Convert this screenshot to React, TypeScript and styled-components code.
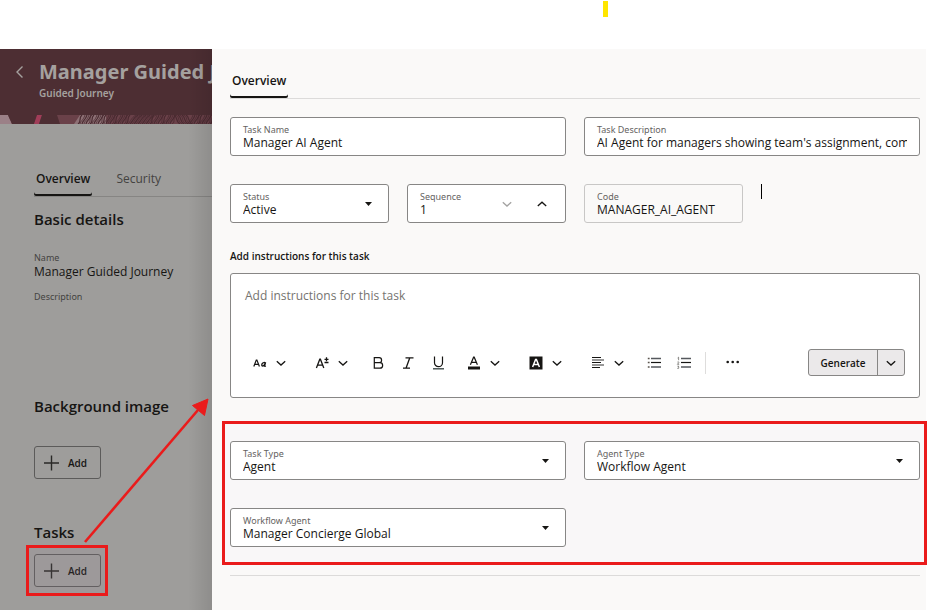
import React, { useState } from "react";
import styled, { createGlobalStyle } from "styled-components";

const GlobalStyle = createGlobalStyle`
  *, *::before, *::after { box-sizing: border-box; }
  body {
    margin: 0;
    background: #fff;
    color: #161513;
    font-family: "Open Sans", "Noto Sans", sans-serif;
    font-size: 12px;
    line-height: 16px;
  }
  button, input, select, textarea { font: inherit; color: inherit; }
  h1, h2, p { margin: 0; }
`;

const Page = styled.div`
  display: flex;
  flex-direction: column;
  min-height: 100vh;
`;

const TopStrip = styled.div`
  height: 49px;
  padding-top: 1px;
`;

const YellowMark = styled.div`
  width: 5px;
  height: 16px;
  margin-left: 65%;
  background: #ffe600;
`;

const Workspace = styled.div`
  display: flex;
  flex: 1;
`;

/* Dimmed page behind the drawer */

const Backdrop = styled.aside`
  position: relative;
  width: 212px;
  flex: none;
  background: #9e9d9b;
  &::after {
    content: "";
    position: absolute;
    inset: 0 0 0 auto;
    width: 24px;
    background: linear-gradient(to right, rgba(0, 0, 0, 0), rgba(0, 0, 0, 0.1));
    pointer-events: none;
  }
`;

const Banner = styled.header`
  display: flex;
  gap: 12px;
  height: 66px;
  padding: 9px 0 0 13px;
  background: #4d2e33;
  color: #a5a19f;
  white-space: nowrap;
`;

const BannerText = styled.div`
  flex: 1;
  min-width: 0;
  font-family: "Noto Sans", "Open Sans", sans-serif;
`;

const BackButton = styled.button`
  display: flex;
  align-items: center;
  width: 14px;
  height: 28px;
  padding: 0;
  border: 0;
  background: none;
`;

const BannerTitle = styled.h1`
  overflow: hidden;
  font-size: 20px;
  line-height: 28px;
  font-weight: 700;
`;

const BannerSubtitle = styled.p`
  font-size: 10px;
  line-height: 14px;
  font-weight: 600;
`;

const BandSvg = styled.svg`
  display: block;
  width: 100%;
  height: 9px;
`;

const TabBar = styled.nav<{ $dim?: boolean }>`
  display: flex;
  gap: 22px;
  border-bottom: 1px solid ${(p) => (p.$dim ? "#868583" : "#dcdbda")};
`;

const Tab = styled.button<{ $active?: boolean }>`
  height: 33px;
  padding: 0 2px 2px;
  border: 0;
  border-radius: 2px;
  background: none;
  font-weight: ${(p) => (p.$active ? 600 : 400)};
  color: ${(p) => (p.$active ? "#161513" : "#444341")};
  box-shadow: ${(p) => (p.$active ? "inset 0 -2px #161513" : "none")};
`;

const BackdropBody = styled.div`
  padding: 39px 0 0 34px;
`;

const Heading = styled.h2`
  font-size: 15px;
  line-height: 20px;
  font-weight: 600;
`;

const DetailsSection = styled.section`
  padding: 12px 0 69px;
`;

const Details = styled.dl`
  margin: 22px 0 0;
`;

const Term = styled.dt`
  font-family: "Noto Sans", "Open Sans", sans-serif;
  font-size: 9px;
  line-height: 14px;
  color: #444341;
`;

const Value = styled.dd`
  min-height: 12px;
  margin: 0 0 11px;
  line-height: 14px;
`;

const Section = styled.section`
  position: relative;
  margin-bottom: 43px;
  &:last-child { margin-bottom: 0; }
`;

const AddButton = styled.button<{ $gap: number }>`
  display: flex;
  align-items: center;
  gap: 8px;
  width: 67px;
  height: 33px;
  margin-top: ${(p) => p.$gap}px;
  padding: 0 9px;
  border: 1px solid #5c5b5a;
  border-radius: 3px;
  background: none;
  font-size: 10px;
  font-weight: 600;
`;

const CalloutFrame = styled.div`
  position: absolute;
  left: -8px;
  bottom: -9px;
  width: 82px;
  height: 51px;
  border: 3px solid #ea1b1b;
  background: rgba(160, 130, 145, 0.12);
  pointer-events: none;
`;

const CalloutArrow = styled.svg`
  position: absolute;
  left: 46px;
  bottom: 40px;
  width: 134px;
  height: 152px;
  z-index: 2;
  pointer-events: none;
`;

/* Drawer */

const Drawer = styled.main`
  flex: 1;
  min-width: 0;
  margin-right: 1px;
  padding: 16px 6px 0 18px;
  background: #faf9f8;
`;

const FieldGrid = styled.div<{ $cols: number }>`
  display: grid;
  grid-template-columns: repeat(${(p) => p.$cols}, minmax(0, 1fr));
  gap: 28px 18px;
`;

const FormArea = styled.div`
  display: flex;
  flex-direction: column;
  gap: 28px;
  padding-top: 18px;
`;

const FieldBox = styled.div<{ $readOnly?: boolean }>`
  display: flex;
  align-items: center;
  height: 39px;
  padding: 0 12px;
  border: 1px solid ${(p) => (p.$readOnly ? "#c8c7c6" : "#878685")};
  border-radius: 3px;
  background: ${(p) => (p.$readOnly ? "transparent" : "#fff")};
`;

const FieldText = styled.div`
  display: flex;
  flex-direction: column;
  flex: 1;
  min-width: 0;
`;

const FieldLabel = styled.label`
  font-family: "Noto Sans", "Open Sans", sans-serif;
  font-size: 9px;
  line-height: 11px;
  color: #65635f;
`;

const FieldInput = styled.input`
  width: 100%;
  height: 15px;
  padding: 0;
  border: 0;
  outline: 0;
  background: none;
  line-height: 15px;
`;

const FieldSelect = styled.select`
  width: 100%;
  height: 15px;
  padding: 0;
  border: 0;
  outline: 0;
  appearance: none;
  background: none;
  line-height: 15px;
`;

const ArrowSlot = styled.span`
  display: flex;
  padding-right: 4px;
  pointer-events: none;
`;

const StepButton = styled.button`
  display: flex;
  justify-content: center;
  width: 35px;
  padding: 0;
  border: 0;
  background: none;
  &:last-child { margin-right: -6px; }
`;

const TextCaret = styled.span`
  width: 1px;
  height: 15px;
  background: #000;
`;

const EditorLabel = styled.label`
  display: block;
  margin: 25px 0 9px;
  font-size: 10px;
  font-weight: 600;
`;

const Editor = styled.div`
  height: 125px;
  padding: 14px 14px 0 8px;
  border: 1px solid #878685;
  border-radius: 3px;
  background: #fff;
`;

const EditorArea = styled.textarea`
  display: block;
  width: 100%;
  height: 61px;
  padding: 0 6px;
  border: 0;
  outline: 0;
  resize: none;
  background: none;
  &::placeholder { color: #75736f; opacity: 1; }
`;

const Toolbar = styled.div`
  display: flex;
  align-items: center;
  height: 27px;
`;

const ToolButton = styled.button`
  display: flex;
  align-items: center;
  justify-content: center;
  width: 30px;
  height: 24px;
  padding: 0;
  border: 0;
  background: none;
`;

const MenuToolButton = styled(ToolButton)`
  justify-content: flex-start;
  gap: 7px;
  width: 62px;
  padding-left: 13px;
`;

const ToolDivider = styled.span`
  width: 1px;
  height: 22px;
  margin: 0 12px 0 6px;
  background: #dedddc;
`;

const SplitButton = styled.div`
  display: flex;
  height: 27px;
  margin-left: auto;
  border: 1px solid #878685;
  border-radius: 3px;
  background: #ebe9ea;
`;

const GenerateButton = styled.button`
  width: 69px;
  padding: 0;
  border: 0;
  border-right: 1px solid #878685;
  background: none;
  font-size: 10px;
  font-weight: 600;
`;

const GenerateMenuButton = styled.button`
  display: flex;
  align-items: center;
  justify-content: center;
  width: 26px;
  padding: 0;
  border: 0;
  background: none;
`;

const HighlightFrame = styled.section`
  margin: 23px -7px 10px -8px;
  padding: 17px 4px 15px 5px;
  border: 3px solid #ea1b1b;
  background: #f9f7f8;
`;

const Rule = styled.hr`
  margin: 0;
  border: 0;
  border-top: 1px solid #dcdbda;
`;

const Chevron = ({ color = "#161513", up = false }: { color?: string; up?: boolean }) => (
  <svg width="12" height="12" viewBox="0 0 12 12" fill="none" stroke={color} strokeWidth="1.3">
    <path d={up ? "M1.8 8 6 4.2 10.2 8" : "M1.8 4.2 6 8 10.2 4.2"} />
  </svg>
);

const Plus = () => (
  <svg width="16" height="16" viewBox="0 0 16 16" stroke="#2a2927" strokeWidth="1.4">
    <path d="M7.500 .5v15M0 8h15" />
  </svg>
);

const IconFrame = ({ children }: { children: React.ReactNode }) => (
  <svg width="16" height="16" viewBox="0 0 16 16" fill="none" stroke="#161513" strokeWidth="1.2">
    {children}
  </svg>
);

const FontIcon = () => (
  <IconFrame>
    <path d="M1.8 11.5 4.3 5h.6l2.5 6.5M2.8 9.4h3.7" strokeWidth="1.2" />
    <path d="M13.600 7.300 12.600 10.700c-.1.7.5.7 1.200.2M13.200 8.400c-.3-1.300-2.300-1.200-3.200.5-.7 1.600.1 2.300 1 2 .9-.3 1.500-1.100 1.900-1.900" strokeWidth="1.3" />
  </IconFrame>
);

const SizeIcon = () => (
  <IconFrame>
    <path d="M2.400 13 5.800 4.200h.6L9.800 13M3.600 10.100h5" strokeWidth="1.3" />
    <path d="M10.500 4.300h4M12.500 2.300v4M10.500 7.500h4" strokeWidth="1.3" />
  </IconFrame>
);

const BoldIcon = () => (
  <IconFrame>
    <path d="M4.300 2.700h4.800a2.500 2.500 0 0 1 0 5H4.300zM4.300 7.700h5.600a2.700 2.700 0 0 1 0 5.500H4.300z" />
  </IconFrame>
);

const ItalicIcon = () => (
  <IconFrame>
    <path d="M5.5 2.8h8M3 13.2h7M9.8 2.8 6 13.2" strokeWidth="1.3" />
  </IconFrame>
);

const UnderlineIcon = () => (
  <IconFrame>
    <path d="M4.500 1.500v6.200a4 4 0 0 0 8 0V1.500" />
    <path d="M3 13.800h11" stroke="#3f4a4a" strokeWidth="1.4" />
  </IconFrame>
);

const TextColorIcon = () => (
  <IconFrame>
    <path d="M4.400 9.800 7.600 2.200h.6l3.200 7.600M5.500 7.300h4.800" />
    <path d="M2 13h12" strokeWidth="3" />
  </IconFrame>
);

const FillColorIcon = () => (
  <IconFrame>
    <path d="M1.5 1.5h13v13h-13z" fill="#161513" stroke="none" />
    <path d="M4.6 12 7.6 4.4h.8l3 7.6M5.6 9.4h4.8" stroke="#fff" strokeWidth="1.5" />
  </IconFrame>
);

const AlignIcon = () => (
  <IconFrame>
    <path d="M2 2.500h9M2 7.500h9M2 12.500h8" strokeWidth="1" />
    <path d="M2 5h12M2 10h12" stroke="#777" strokeWidth="1.6" />
  </IconFrame>
);

const ListIcon = ({ numbered = false }: { numbered?: boolean }) => (
  <IconFrame>
    <path d="M5 3.500h10M5 12h10" stroke="#55585d" strokeWidth="1.3" />
    <path d="M5 7.500h10" strokeWidth="1.200" />
    {numbered ? (
      <path d="M1.6 3 2.6 2.2v3M1.4 7.2c.8-.9 2-.1 1.2.8L1.4 9.3h1.8M1.4 11.2h1.4l-.7 1c1.4.1 1 1.7-.7 1.3" stroke="#6b6966" strokeWidth=".8" />
    ) : (
      <path d="M1.800 3.500h1.800M1.800 7.500h1.800M1.800 12h1.800" stroke="#5a544e" strokeWidth="1.4" />
    )}
  </IconFrame>
);

const MoreIcon = () => (
  <IconFrame>
    <g fill="#161513" stroke="none">
      <circle cx="2.7" cy="7" r="1.3" />
      <circle cx="7.7" cy="7" r="1.3" />
      <circle cx="12.7" cy="7" r="1.3" />
    </g>
  </IconFrame>
);

const contours = Array.from({ length: 34 }, (_, i) => 78 + i * 4);

const contourPath = (x: number, i: number) => {
  if (x > 126 && x < 150) return `M${x} 9C${x + 3} 6 ${x + 3} 3 ${x + 8} 0`;
  if (x > 172 && x < 188) return `M${x} 0c4 2 1 6 6 9`;
  return i % 3 ? `M${x} 9c1-4 3-3 5-9` : `M${x} 9c4-2 0-6 4-9`;
};

const BannerArt = () => (
  <BandSvg viewBox="0 0 212 9" preserveAspectRatio="none" aria-hidden="true">
    <path d="M0 0h212v9H0z" fill="#6a4149" />
    <path d="M0 0h8l4 9H0z" fill="#9b8087" />
    <path d="M8 0h31l-5 9H12z" fill="#4d2e33" />
    <path d="M37 0h5l-3 9h-5z" fill="#a03d58" />
    <path d="M42 0h15l3 9H39z" fill="#4d2e33" />
    <path d="M80 0h26v9H74z" fill="#8d7075" />
    <g fill="none" stroke="#4a2b31" strokeWidth="1.2">
      {contours.map((x, i) => (
        <path key={x} d={contourPath(x, i)} />
      ))}
    </g>
    <g fill="none" stroke="#4a2b31" strokeWidth=".8">
      {contours.map((x, i) => (
        <path key={x} d={contourPath(x + 2, i + 1)} />
      ))}
    </g>
  </BandSvg>
);

interface TextFieldProps {
  id: string;
  label: string;
  value: string;
  readOnly?: boolean;
}

const TextField = ({ id, label, value, readOnly }: TextFieldProps) => (
  <FieldBox $readOnly={readOnly}>
    <FieldText>
      <FieldLabel htmlFor={id}>{label}</FieldLabel>
      <FieldInput id={id} defaultValue={value} readOnly={readOnly} />
    </FieldText>
  </FieldBox>
);

const SelectField = ({ id, label, value }: TextFieldProps) => (
  <FieldBox>
    <FieldText>
      <FieldLabel htmlFor={id}>{label}</FieldLabel>
      <FieldSelect id={id} defaultValue={value}>
        <option>{value}</option>
      </FieldSelect>
    </FieldText>
    <ArrowSlot>
      <svg width="7" height="4" viewBox="0 0 7 4">
        <path d="M0 0h7L3.5 4z" fill="#161513" />
      </svg>
    </ArrowSlot>
  </FieldBox>
);

const SequenceField = () => {
  const [value, setValue] = useState(1);
  return (
    <FieldBox>
      <FieldText>
        <FieldLabel htmlFor="sequence">Sequence</FieldLabel>
        <FieldInput
          id="sequence"
          inputMode="numeric"
          value={value}
          onChange={(e) => setValue(Number(e.target.value) || 1)}
        />
      </FieldText>
      <StepButton aria-label="Decrease" disabled={value <= 1} onClick={() => setValue(value - 1)}>
        <Chevron color="#a3a2a1" />
      </StepButton>
      <StepButton aria-label="Increase" onClick={() => setValue(value + 1)}>
        <Chevron up />
      </StepButton>
    </FieldBox>
  );
};

const menuTool = (label: string, icon: React.ReactNode) => (
  <MenuToolButton aria-label={label}>
    {icon}
    <Chevron />
  </MenuToolButton>
);

export default function App() {
  return (
    <Page>
      <GlobalStyle />
      <TopStrip>
        <YellowMark />
      </TopStrip>
      <Workspace>
        <Backdrop>
          <Banner>
            <BackButton aria-label="Back">
              <svg width="14" height="14" viewBox="0 0 14 14" fill="none" stroke="#a5a19f" strokeWidth="1.4">
                <path d="M9.5 1.5 4 7l5.5 5.5" />
              </svg>
            </BackButton>
            <BannerText>
              <BannerTitle>Manager Guided Journey</BannerTitle>
              <BannerSubtitle>Guided Journey</BannerSubtitle>
            </BannerText>
          </Banner>
          <BannerArt />
          <BackdropBody>
            <TabBar $dim>
              <Tab $active>Overview</Tab>
              <Tab>Security</Tab>
            </TabBar>
            <DetailsSection>
              <Heading>Basic details</Heading>
              <Details>
                <Term>Name</Term>
                <Value>Manager Guided Journey</Value>
                <Term>Description</Term>
                <Value />
              </Details>
            </DetailsSection>
            <Section>
              <Heading>Background image</Heading>
              <AddButton $gap={30}>
                <Plus />
                Add
              </AddButton>
            </Section>
            <Section>
              <Heading>Tasks</Heading>
              <AddButton $gap={12}>
                <Plus />
                Add
              </AddButton>
              <CalloutFrame />
              <CalloutArrow viewBox="0 0 134 152" fill="#ea1b1b">
                <path d="M5 147 118 15" stroke="#ea1b1b" strokeWidth="2.6" />
                <path d="M128 4 112.500 10.500 124.500 20.500z" stroke="#ea1b1b" strokeWidth="1" />
              </CalloutArrow>
            </Section>
          </BackdropBody>
        </Backdrop>
        <Drawer>
          <TabBar>
            <Tab $active>Overview</Tab>
          </TabBar>
          <FormArea>
            <FieldGrid $cols={2}>
              <TextField id="task-name" label="Task Name" value="Manager AI Agent" />
              <TextField
                id="task-description"
                label="Task Description"
                value="AI Agent for managers showing team's assignment, compensation and goals"
              />
            </FieldGrid>
            <FieldGrid $cols={4}>
              <SelectField id="status" label="Status" value="Active" />
              <SequenceField />
              <TextField id="code" label="Code" value="MANAGER_AI_AGENT" readOnly />
              <TextCaret />
            </FieldGrid>
          </FormArea>
          <EditorLabel htmlFor="instructions">Add instructions for this task</EditorLabel>
          <Editor>
            <EditorArea id="instructions" placeholder="Add instructions for this task" />
            <Toolbar>
              {menuTool("Font", <FontIcon />)}
              {menuTool("Font size", <SizeIcon />)}
              <ToolButton aria-label="Bold"><BoldIcon /></ToolButton>
              <ToolButton aria-label="Italic"><ItalicIcon /></ToolButton>
              <ToolButton aria-label="Underline"><UnderlineIcon /></ToolButton>
              {menuTool("Text color", <TextColorIcon />)}
              {menuTool("Highlight color", <FillColorIcon />)}
              {menuTool("Alignment", <AlignIcon />)}
              <ToolButton aria-label="Bulleted list"><ListIcon /></ToolButton>
              <ToolButton aria-label="Numbered list"><ListIcon numbered /></ToolButton>
              <ToolDivider />
              <ToolButton aria-label="More"><MoreIcon /></ToolButton>
              <SplitButton>
                <GenerateButton>Generate</GenerateButton>
                <GenerateMenuButton aria-label="More generate options">
                  <Chevron />
                </GenerateMenuButton>
              </SplitButton>
            </Toolbar>
          </Editor>
          <HighlightFrame>
            <FieldGrid $cols={2}>
              <SelectField id="task-type" label="Task Type" value="Agent" />
              <SelectField id="agent-type" label="Agent Type" value="Workflow Agent" />
              <SelectField id="workflow-agent" label="Workflow Agent" value="Manager Concierge Global" />
            </FieldGrid>
          </HighlightFrame>
          <Rule />
        </Drawer>
      </Workspace>
    </Page>
  );
}
